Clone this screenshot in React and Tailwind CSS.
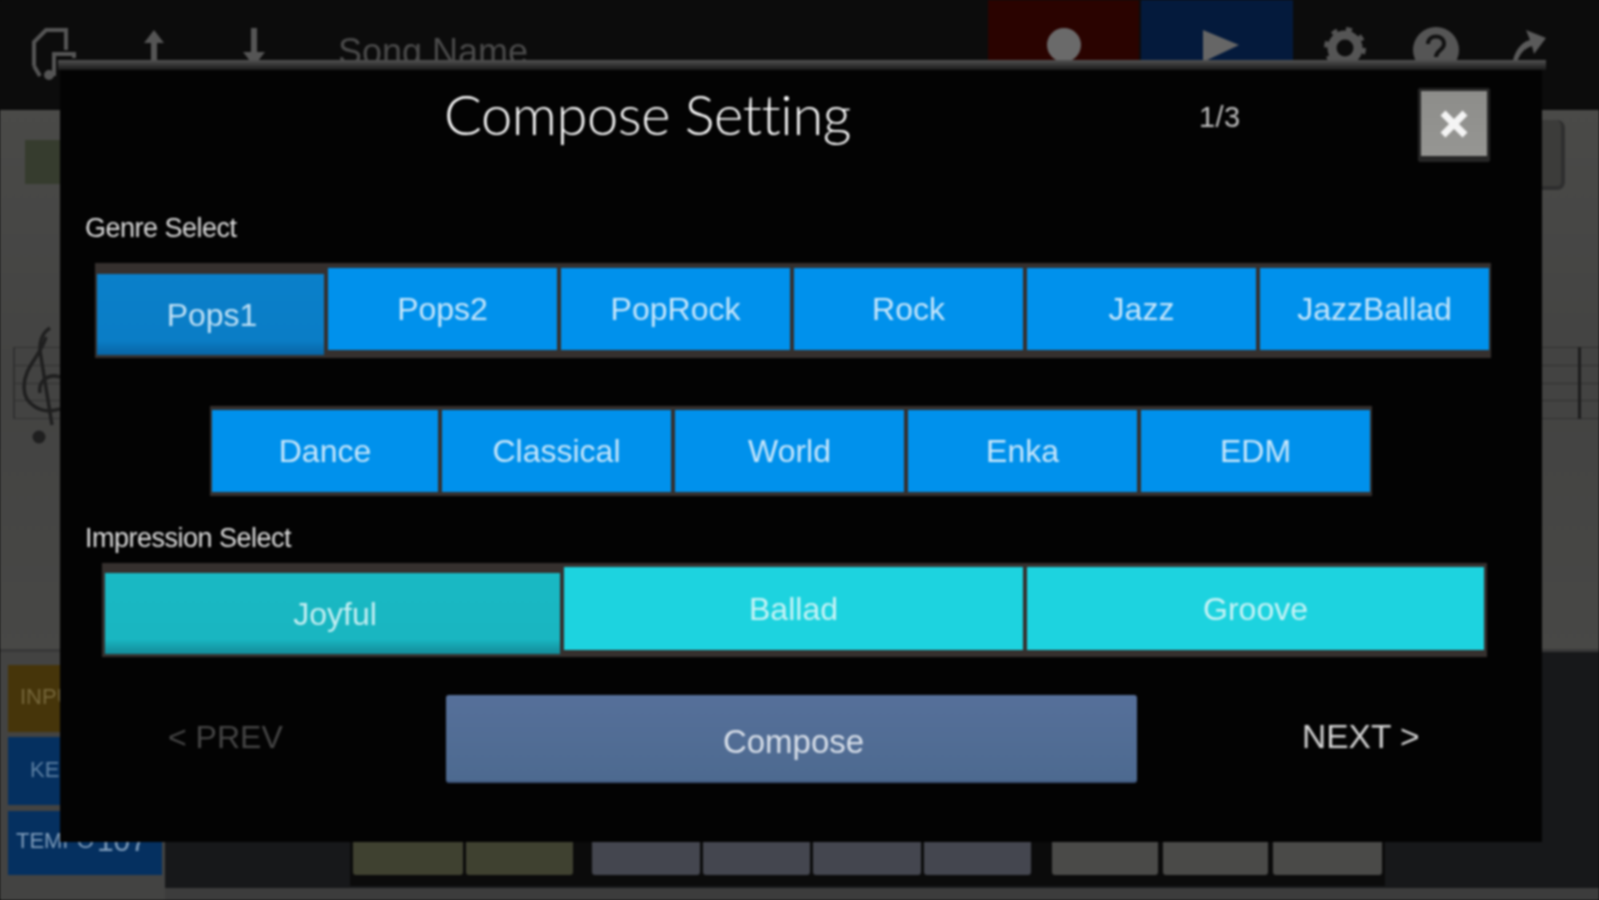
import React from "react";

const sans = "font-['Liberation_Sans',Arial,sans-serif]";

function Choice({ label, active, cyan, className = "" }) {
  const base = cyan
    ? active
      ? "mt-[6px] h-[81px] bg-gradient-to-b from-[#19b9c4] via-[#19b6c1] via-[82%] to-[#138a98] text-[#c4eef2]"
      : "h-[83px] bg-[#1dd3df] text-[#c8f3f6]"
    : active
      ? "mt-[6px] h-[81px] bg-gradient-to-b from-[#0a80ca] via-[#0a7dc6] via-[82%] to-[#0864a4] text-[#bfe0f5]"
      : "h-[82px] bg-[#0091ec] text-[#c6e6fb]";
  return (
    <div className={`flex items-center justify-center text-[32px] ${base} ${className}`}>
      {label}
    </div>
  );
}

function Group({ className, children }) {
  return <div className={`flex gap-[4px] bg-[#35302e] ${className}`}>{children}</div>;
}

function Arrow({ up }) {
  return (
    <svg width="26" height="44" viewBox="0 0 26 44" className="shrink-0">
      {up ? (
        <path d="M13 2 L23 15 H16 V44 H10 V15 H3 Z" fill="#555" />
      ) : (
        <path d="M10 0 H16 V24 H24 L13 38 L2 24 H10 Z" fill="#555" />
      )}
    </svg>
  );
}

function Keys({ color, widths, gap, className = "" }) {
  return (
    <div className={`flex ${gap} ${className}`}>
      {widths.map((w, i) => (
        <div key={i} className={`h-[33px] rounded-b-[3px] ${color}`} style={{ width: w }} />
      ))}
    </div>
  );
}

export default function App() {
  return (
    <div className="w-[1599px] h-[900px] overflow-hidden bg-[#0c0c0c]">
      <div className={`relative w-[1599px] h-[900px] flex flex-col blur-[1px] ${sans}`}>
        {/* Background app: top bar */}
        <div className="h-[110px] shrink-0 flex bg-[#0c0c0c]">
          <div className="w-[338px] flex items-start pt-[28px]">
            <svg width="48" height="52" viewBox="0 0 48 52" className="ml-[32px] shrink-0" fill="none" stroke="#555" strokeWidth="4">
              <path d="M2 38 V14 L14 2 H34 V22 M2 38 L8 48" />
              <path d="M22 48 V26 H42 V30" />
              <circle cx="17" cy="47" r="3" fill="#555" />
            </svg>
            <div className="ml-[61px]"><Arrow up /></div>
            <div className="ml-[74px]"><Arrow /></div>
          </div>
          <div className="w-[650px] pt-[28px] text-[36px] leading-[48px] text-[#4a4a4a]">Song Name</div>
          <div className="w-[151px] h-full bg-[#2a0300] flex justify-center pt-[28px]">
            <div className="w-[34px] h-[34px] rounded-full bg-[#6a6a6a]" />
          </div>
          <div className="ml-[2px] w-[152px] h-full bg-[#041a3c] pt-[30px] pl-[62px]">
            <svg width="36" height="32" viewBox="0 0 36 32"><path d="M0 0 L36 15 L0 32 Z" fill="#666" /></svg>
          </div>
          <div className="flex items-start pt-[26px]">
            <svg width="44" height="44" viewBox="0 0 44 44" className="ml-[30px]" fill="none" stroke="#555">
              <circle cx="22" cy="22" r="13" strokeWidth="9" />
              <circle cx="22" cy="22" r="19" strokeWidth="4" strokeDasharray="6 9" />
            </svg>
            <svg width="48" height="48" viewBox="0 0 48 48" className="ml-[45px]">
              <circle cx="24" cy="24" r="23" fill="#555" />
              <path d="M16 18 C16 8 32 8 32 18 C32 24 24 24 24 31" fill="none" stroke="#111" strokeWidth="4" />
              <circle cx="24" cy="38" r="2.5" fill="#111" />
            </svg>
            <svg width="36" height="40" viewBox="0 0 36 40" className="ml-[50px]">
              <path d="M2 40 C4 24 12 16 20 14 L16 4 L36 12 L24 28 L22 20 C14 22 8 30 6 40 Z" fill="#5a5a5a" />
            </svg>
          </div>
        </div>

        {/* Background app: score */}
        <div className="h-[542px] shrink-0 bg-gradient-to-b from-[#4a4a48] via-[#434342] to-[#484846] border-b-[3px] border-[#383838]">
          <div className="flex mt-[10px] ml-[25px] w-[1540px] h-[70px]">
            <div className="w-[60px] h-[44px] mt-[20px] bg-[#363c2e]" />
            <div className="flex-1 h-[70px] rounded-r-[8px] bg-[#3c3c3a] border-r-[4px] border-b-[4px] border-[#2f2f2f]" />
          </div>
          <div className="relative mt-[157px] ml-[13px] w-[1586px] h-[72px] flex flex-col justify-between border-l-2 border-[#303030]">
            <div className="h-[1px] bg-[#303030]" />
            <div className="h-[1px] bg-[#303030]" />
            <div className="h-[1px] bg-[#303030]" />
            <div className="h-[1px] bg-[#303030]" />
            <div className="h-[1px] bg-[#303030]" />
            <div className="absolute left-[1563px] top-0 h-[72px] w-[3px] bg-[#1c1c1c]" />
            <svg width="50" height="122" viewBox="0 0 50 122" className="absolute left-[-5px] top-[-22px]" fill="none" stroke="#1f1f1f" strokeWidth="3.5">
              <path d="M40 3 C32 8 28 18 31 32 L42 100" />
              <path d="M36 12 C30 32 14 42 14 62 C14 80 32 90 50 84 M50 52 C38 48 28 56 30 68" />
              <circle cx="29" cy="112" r="6.5" fill="#1f1f1f" stroke="none" />
            </svg>
          </div>
        </div>

        {/* Background app: bottom panel */}
        <div className="flex-1 flex bg-[#3c3c3c] min-h-0">
          <div className="w-[165px] shrink-0 bg-[#434342] pt-[13px] pl-[8px] pr-[3px] flex flex-col">
            <div className="h-[67px] bg-[#46350a] text-[22px] leading-[64px] text-[#75663a] pl-[12px]">INPUT</div>
            <div className="mt-[5px] h-[68px] bg-[#053060] text-[22px] leading-[66px] text-[#5d80a3] pl-[22px]">KEY</div>
            <div className="mt-[6px] h-[64px] bg-[#053060] text-[22px] leading-[60px] text-[#7f9cba] pl-[8px] flex justify-between pr-[15px]">
              <span>TEMPO</span>
              <span className="text-[30px]">107</span>
            </div>
          </div>
          <div className="flex-1 h-[236px] bg-[#17181a]">
            <div className="ml-[185px] w-[1035px] h-[234px] bg-[#0b0b0b] flex items-start pt-[190px] pl-[3px]">
              <Keys color="bg-[#3f4130]" widths={[110, 107]} gap="gap-[3px]" />
              <Keys color="bg-[#44464f]" widths={[108, 107, 108, 107]} gap="gap-[3px]" className="ml-[19px]" />
              <Keys color="bg-[#4a4a48]" widths={[106, 105, 109]} gap="gap-[5px]" className="ml-[21px]" />
            </div>
          </div>
        </div>

        {/* Modal */}
        <div className="absolute left-[60px] top-[60px] w-[1482px] h-[782px] bg-[#030303] flex flex-col">
          <div className="h-[10px] shrink-0 -ml-[2px] w-[1488px] bg-gradient-to-b from-[#525252] to-[#1a1a1a]" />
          <div className="h-[90px] shrink-0 flex items-start text-white">
            <div className="ml-[384px] mt-[9px] w-[440px] font-['Lato',sans-serif] font-light text-[56px] leading-[70px] tracking-[-0.4px] text-white">
              Compose Setting
            </div>
            <div className="ml-[315px] mt-[27px] text-[29px] leading-[40px] text-[#bdbdbd] tracking-[0.4px]">1/3</div>
            <div className="ml-[177px] mt-[18px] w-[72px] h-[74px] px-[3px] pt-[3px] pb-[6px] bg-[#262626] rounded-[2px]">
              <div className="w-full h-full bg-gradient-to-b from-[#8d8d8a] to-[#969693] flex items-center justify-center">
                <svg width="30" height="30" viewBox="0 0 30 30">
                  <path d="M4 4 L26 26 M26 4 L4 26" stroke="#f4f4f4" strokeWidth="7" />
                </svg>
              </div>
            </div>
          </div>

          <div className="mt-[50px] ml-[25px] h-[36px] text-[27px] leading-[36px] tracking-[-0.5px] text-[#dcdcdc]">Genre Select</div>

          <Group className="mt-[17px] ml-[35px] w-[1396px] h-[95px] pt-[5px] px-[2px]">
            <Choice label="Pops1" active className="w-[227px] shrink-0 pl-[3px]" />
            <Choice label="Pops2" className="flex-1" />
            <Choice label="PopRock" className="flex-1" />
            <Choice label="Rock" className="flex-1" />
            <Choice label="Jazz" className="flex-1" />
            <Choice label="JazzBallad" className="flex-1" />
          </Group>

          <Group className="mt-[48px] ml-[150px] w-[1162px] h-[90px] pt-[4px] px-[2px]">
            <Choice label="Dance" className="w-[226px] shrink-0" />
            <Choice label="Classical" className="flex-1" />
            <Choice label="World" className="flex-1" />
            <Choice label="Enka" className="flex-1" />
            <Choice label="EDM" className="flex-1" />
          </Group>

          <div className="mt-[24px] ml-[25px] h-[36px] text-[27px] leading-[36px] tracking-[-0.5px] text-[#dcdcdc]">Impression Select</div>

          <Group className="mt-[7px] ml-[42px] w-[1385px] h-[94px] pt-[4px] px-[3px]">
            <Choice label="Joyful" active cyan className="w-[455px] shrink-0 pl-[5px]" />
            <Choice label="Ballad" cyan className="w-[459px] shrink-0" />
            <Choice label="Groove" cyan className="flex-1" />
          </Group>

          <div className="mt-[38px] flex items-center h-[88px]">
            <div className="ml-[108px] w-[278px] pb-[4px] text-[32px] text-[#454545]">&lt; PREV</div>
            <div className="w-[691px] h-[88px] rounded-[3px] bg-gradient-to-b from-[#56709a] to-[#4d6a90] border-b-[2px] border-[#3e5478] flex items-center justify-center pt-[8px] pl-[4px] text-[33px] text-[#d8dfe9]">
              Compose
            </div>
            <div className="ml-[165px] pb-[4px] text-[33.5px] text-[#d2d2d2]">NEXT &gt;</div>
          </div>
        </div>
      </div>
    </div>
  );
}
